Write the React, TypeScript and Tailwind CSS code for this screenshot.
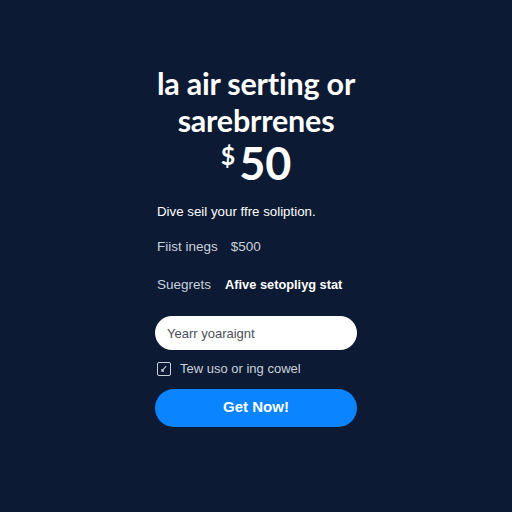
export default function App() {
  return (
    <div className="min-h-screen w-full bg-[#0c1a33] flex justify-center font-['Liberation_Sans',Arial,sans-serif]">
      <div className="w-[202px] pt-[65px] flex flex-col">
        {/* Headline + price */}
        <h1 className="font-['Lato',sans-serif] font-bold text-[30.5px] leading-[37px] text-white text-center tracking-[-0.2px] whitespace-nowrap -mx-6">
          la air serting or
          <br />
          sarebrrenes
        </h1>
        <div className="flex justify-center items-start mt-[1px] font-['Lato',sans-serif] font-bold text-white">
          <span className="text-[25px] leading-none mt-[3px] mr-[4px]">$</span>
          <span className="text-[45px] leading-[46px]">50</span>
        </div>

        <p className="mt-[17px] pl-[2px] text-[13.3px] leading-[18px] text-white">Dive seil your ffre soliption.</p>

        {/* Plan details */}
        <div className="mt-[17px] pl-[2px] flex gap-[13px] text-[13.5px] leading-[18px] text-[#c9d1dd]">
          <span>Fiist inegs</span>
          <span>$500</span>
        </div>
        <div className="mt-[20px] pl-[2px] flex gap-[14px] text-[13.5px] leading-[18px]">
          <span className="text-[#c9d1dd]">Suegrets</span>
          <span className="text-white font-bold text-[12.8px]">Afive setopliyg stat</span>
        </div>

        {/* Signup form */}
        <input
          className="mt-[22px] h-[34px] w-full rounded-full bg-white px-[12px] text-[13px] text-[#333] placeholder:text-[#4a4f58] outline-none"
          placeholder="Yearr yoaraignt"
        />
        <label className="mt-[9px] ml-[2px] flex items-center gap-[9px] text-[13px] text-[#c9d1dd]">
          <span className="w-[14px] h-[14px] border border-[#c9d1dd] rounded-[2px] flex items-center justify-center">
            <svg viewBox="0 0 14 14" className="w-[10px] h-[10px]" fill="none" stroke="#c9d1dd" strokeWidth="1.5">
              <path d="M10 3 L4 10 M4 7 L4 10 L7 10" />
            </svg>
          </span>
          Tew uso or ing cowel
        </label>
        <button className="mt-[10px] h-[38px] w-full rounded-full bg-[#0a84ff] text-white font-bold text-[15px]">
          Get Now!
        </button>
      </div>
    </div>
  )
}
